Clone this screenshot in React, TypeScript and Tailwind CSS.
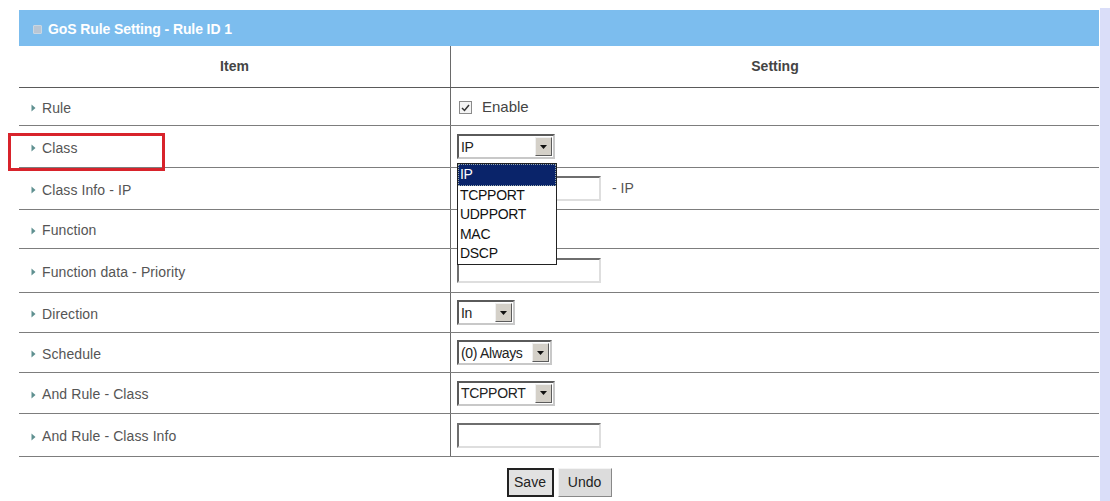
import React from 'react';

const FONT = { fontFamily: '"Liberation Sans", Arial, sans-serif' };

function Arrow() {
  return (
    <svg width="5" height="8" viewBox="0 0 5 8" className="mr-[6px] shrink-0">
      <path d="M0.5 0.5 L4.5 4 L0.5 7.5 Z" fill="#5f9090" />
    </svg>
  );
}

function FakeSelect({ value, width }: { value: string; width: number }) {
  return (
    <div
      className="flex h-[25px] items-stretch border-2 border-t-[#5a5a5a] border-l-[#5a5a5a] border-r-[#c8c8c8] border-b-[#c8c8c8] bg-white"
      style={{ width }}
    >
      <div className="flex flex-1 items-center pl-[2px] text-[14px] leading-none text-[#222] tracking-[-0.3px]">{value}</div>
      <div className="my-[1px] mr-[1px] flex w-[17px] items-center justify-center border border-t-[#f0f0f0] border-l-[#f0f0f0] border-r-[#5c5c5c] border-b-[#5c5c5c] bg-[#d4d0c8]">
        <svg width="7" height="4" viewBox="0 0 7 4">
          <path d="M0 0 H7 L3.5 4 Z" fill="#111" />
        </svg>
      </div>
    </div>
  );
}

function TextBox() {
  return (
    <div className="h-[25px] w-[144px] border-2 border-t-[#6e6e6e] border-l-[#6e6e6e] border-r-[#dedede] border-b-[#dedede] bg-white" />
  );
}

interface RowDef {
  label: string;
  h: number;
  setting: React.ReactNode;
}

export default function App() {
  const rows: RowDef[] = [
    {
      label: 'Rule',
      h: 38,
      setting: (
        <div className="flex items-center pt-[2px]">
          <div className="ml-[2px] flex h-[13px] w-[13px] items-center justify-center border border-[#8a8a8a] bg-[#f4f4f4]">
            <svg width="9" height="8" viewBox="0 0 9 8">
              <path d="M1 4 L3.5 6.5 L8 1" stroke="#333" strokeWidth="1.5" fill="none" />
            </svg>
          </div>
          <span className="ml-[10px] text-[15px] text-[#444]">Enable</span>
        </div>
      ),
    },
    {
      label: 'Class',
      h: 42,
      setting: (
        <div className="relative">
          <FakeSelect value="IP" width={98} />
          <div className="absolute left-0 top-[29px] z-10 w-[100px] border border-[#222] bg-white text-[14px] leading-[19.6px] text-[#111] tracking-[-0.3px]">
            <div className="border border-dotted border-[#9aa] bg-[#0a246a] pl-[1px] text-white">IP</div>
            <div className="pl-[2px]">TCPPORT</div>
            <div className="pl-[2px]">UDPPORT</div>
            <div className="pl-[2px]">MAC</div>
            <div className="pl-[2px]">DSCP</div>
          </div>
        </div>
      ),
    },
    {
      label: 'Class Info - IP',
      h: 42,
      setting: (
        <div className="flex items-center">
          <TextBox />
          <span className="ml-[11px] text-[14px] text-[#555]">- IP</span>
        </div>
      ),
    },
    { label: 'Function', h: 39, setting: <FakeSelect value="" width={98} /> },
    { label: 'Function data - Priority', h: 44, setting: <TextBox /> },
    { label: 'Direction', h: 40, setting: <FakeSelect value="In" width={58} /> },
    { label: 'Schedule', h: 40, setting: <FakeSelect value="(0) Always" width={95} /> },
    { label: 'And Rule - Class', h: 41, setting: <FakeSelect value="TCPPORT" width={98} /> },
    { label: 'And Rule - Class Info', h: 43, setting: <TextBox /> },
  ];

  return (
    <div className="relative flex h-[501px] w-[1110px] overflow-hidden bg-white" style={FONT}>
      {/* Main panel */}
      <div className="flex-1 pl-[19px] pt-[10px]">
        <div className="w-[1080px]">
          {/* Title bar */}
          <div className="flex h-[36px] items-center bg-[#7cbdee] pl-[14px] pt-[2px]">
            <div className="mr-[6px] h-[9px] w-[9px] rounded-[1px] border border-[#c9d6e2] bg-[#b9c6d4]" />
            <span className="text-[14px] font-bold tracking-[-0.1px] text-white">GoS Rule Setting - Rule ID 1</span>
          </div>

          {/* Table head */}
          <div className="flex h-[42px] border-b border-[#5a5a5a]">
            <div className="flex w-[432px] items-center justify-center border-r border-[#6a6a6a] text-[14px] font-bold text-[#444]">
              Item
            </div>
            <div className="flex flex-1 items-center justify-center text-[14px] font-bold text-[#444]">Setting</div>
          </div>

          {/* Rows */}
          {rows.map((r) => (
            <div key={r.label} className="flex border-b border-[#7d7d7d]" style={{ height: r.h }}>
              <div className="flex w-[432px] items-center border-r border-[#6a6a6a] pl-[12px] pt-[3px] text-[14px] tracking-[0.1px] text-[#555]">
                <Arrow />
                {r.label}
              </div>
              <div className="flex flex-1 items-center pl-[6px]">{r.setting}</div>
            </div>
          ))}

          {/* Buttons */}
          <div className="flex justify-center gap-[4px] pt-[11px]">
            <button className="h-[29px] w-[47px] border-2 border-[#222] bg-[#e2e2e2] text-[14px] text-[#222]">Save</button>
            <button className="h-[29px] w-[54px] border border-t-[#f4f4f4] border-l-[#f4f4f4] border-r-[#888] border-b-[#888] bg-[#dcdcdc] text-[14px] text-[#222]">
              Undo
            </button>
          </div>
        </div>
      </div>

      {/* Right strip */}
      <div className="mt-[8px] w-[10px] shrink-0 bg-[#dadef9]" />

      {/* Highlight box around Class */}
      <div className="absolute left-[8px] top-[133px] h-[38px] w-[157px] border-[3px] border-[#d8232b]" />
    </div>
  );
}
